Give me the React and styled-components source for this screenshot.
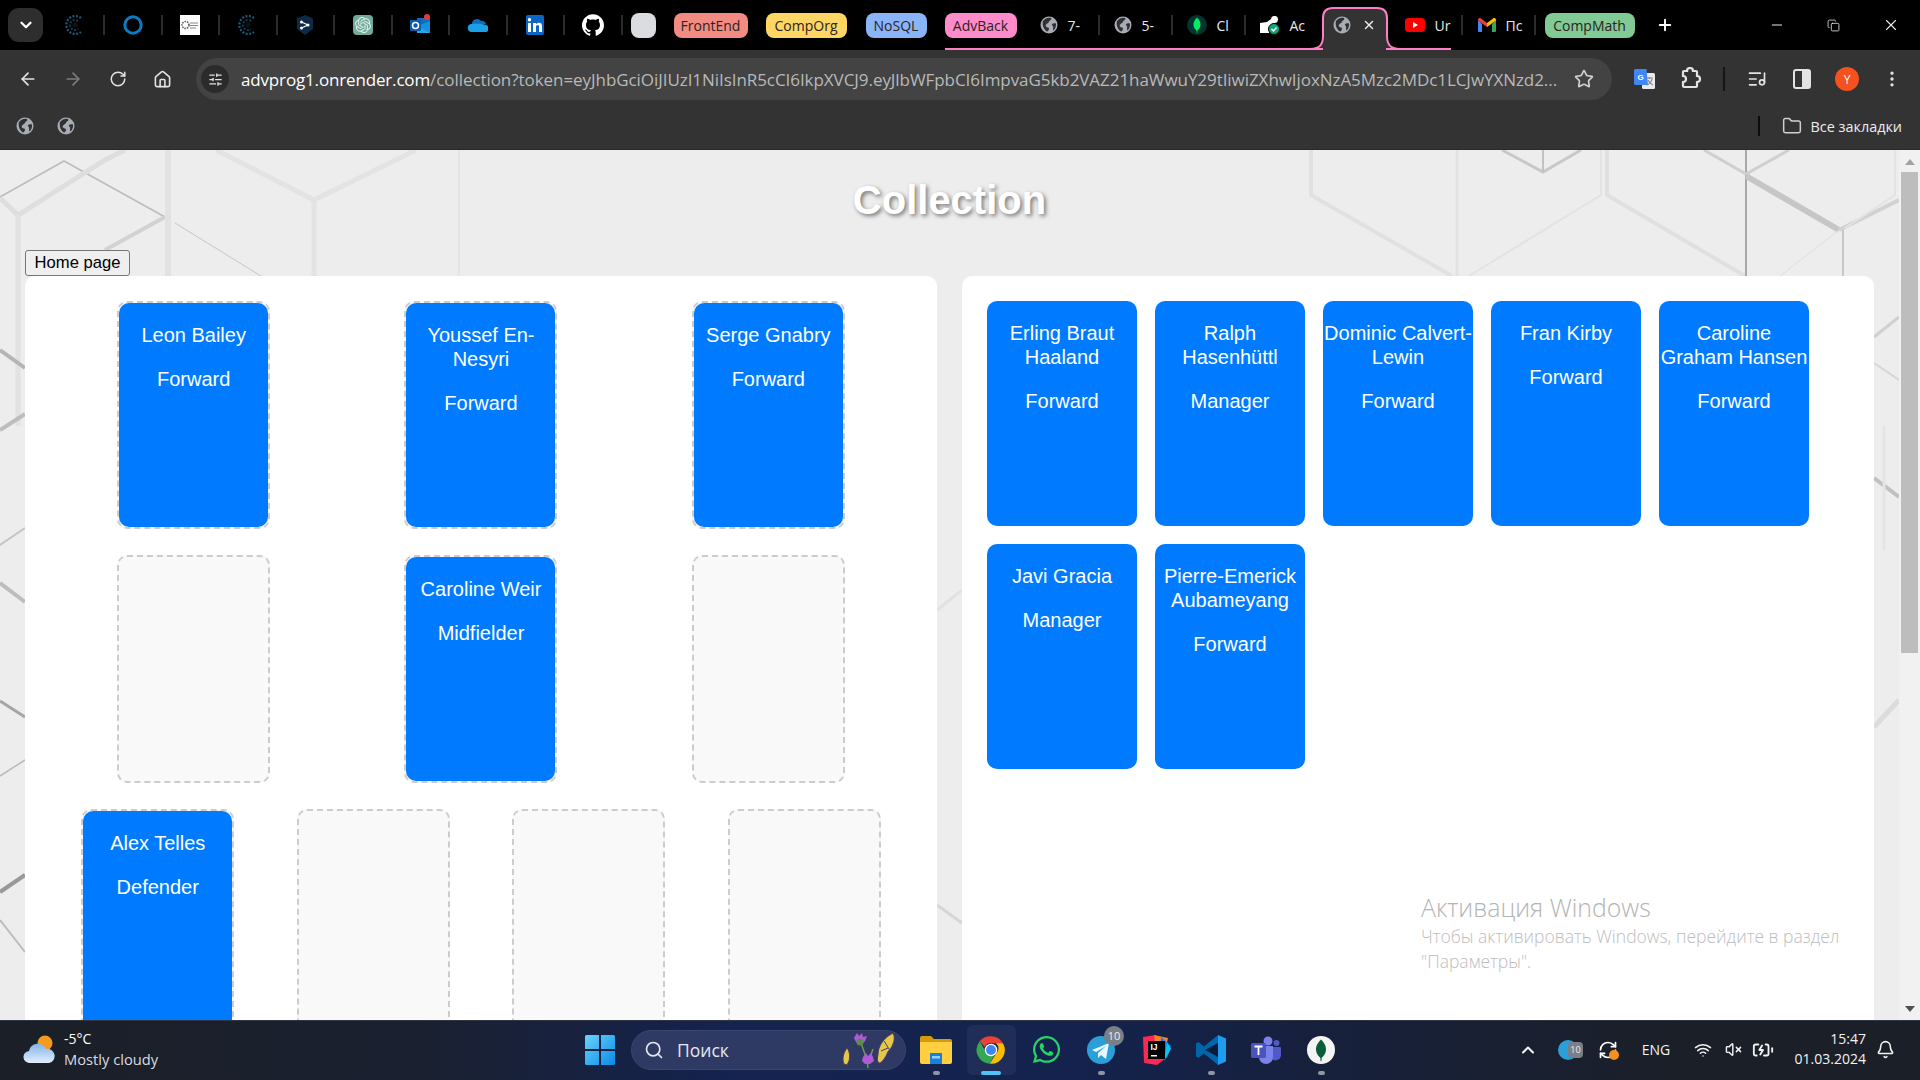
import React from "react";
import styled, { createGlobalStyle } from "styled-components";
import {
  ArrowLeft, ArrowRight, RotateCw, Home, Star, EllipsisVertical, Folder, Plus, X, Minus, Copy,
  ChevronDown, ChevronUp, Search, Bell, Wifi, VolumeX, BatteryCharging, SlidersHorizontal, ListMusic, RefreshCw,
} from "lucide-react";
import { SiGithub, SiOpenai } from "react-icons/si";
import { FaWhatsapp } from "react-icons/fa";

const Global = createGlobalStyle`
  html, body { margin: 0; padding: 0; height: 100%; overflow: hidden; background: #000; }
  #root { height: 100%; }
  * { box-sizing: border-box; }
`;

const UI = `"Open Sans", "Noto Sans", sans-serif`;
const WEB = `"Liberation Sans", Arial, sans-serif`;

const Screen = styled.div`
  width: 1920px; height: 1080px; display: flex; flex-direction: column; overflow: hidden; font-family: ${UI};
`;

/* ---------- tab strip ---------- */
const TabStrip = styled.div`
  position: relative; height: 50px; flex: none; background: #000; display: flex; align-items: center; padding-left: 8px;
`;
const TabMenu = styled.div`
  width: 35px; height: 34px; border-radius: 11px; background: #2e2e2e; color: #fff; margin-right: 3.5px;
  display: flex; align-items: center; justify-content: center;
`;
const Pinned = styled.div`
  position: relative; width: 57.5px; height: 50px; flex: none; display: flex; align-items: center; justify-content: center;
  &::after { content: ""; position: absolute; right: -1px; top: 15px; width: 2px; height: 20px; background: #2c2c2c; }
`;
const GroupChip = styled.div`
  height: 25px; width: ${p => p.$w}px; margin-left: ${p => p.$ml}px; flex: none; border-radius: 8px; background: ${p => p.$c};
  display: flex; align-items: center; justify-content: center; font-size: 14px; color: #2a2320;
`;
const Tab = styled.div`
  position: relative; height: 50px; width: ${p => p.$w}px; flex: none; padding-left: ${p => p.$pl}px; display: flex; align-items: center; gap: 10px;
  color: #e8eaed; font-size: 14px; white-space: nowrap;
  ${p => p.$sep && `&::after { content: ""; position: absolute; right: 0; top: 15px; width: 2px; height: 20px; background: #2c2c2c; }`}
`;
const ActiveTabShape = styled.div`
  position: relative; width: 64px; height: 50px; flex: none; display: flex; align-items: center; padding-left: 10px; color: #eee;
`;
const ActiveTabArt = styled.svg`
  position: absolute; left: -18px; top: 0; pointer-events: none;
`;
const ActiveTabContent = styled.div`
  position: relative; display: flex; align-items: center; gap: 11px;
`;
const PinkLine = styled.div`
  position: absolute; bottom: 0; height: 2px; background: #ff7ec4; left: ${p => p.$l}px; width: ${p => p.$w}px;
`;
const NewTab = styled.div`
  width: 30px; margin-left: 15px; color: #fff; display: flex; justify-content: center;
`;
const WinControls = styled.div`
  margin-left: auto; display: flex; color: #e8e8e8; align-items: center; padding-right: 1px;
`;
const WinBtn = styled.div`
  width: 57px; display: flex; justify-content: center;
`;
const GlobeSvg = styled.svg`flex: none;`;
const GptTile = styled.span`
  width: 20px; height: 20px; border-radius: 4px; background: #74aa9c; display: flex; align-items: center; justify-content: center; color: #dff0ea;
`;
const LinkedTile = styled.span`
  width: 18px; height: 20px; background: #0a66c2; border-radius: 2px; display: flex; align-items: center; justify-content: center;
`;

/* ---------- toolbar ---------- */
const Toolbar = styled.div`
  height: 50px; flex: none; background: #333333; display: flex; align-items: flex-start; padding: 8px 0 0 5px;
`;
const NavBtn = styled.div`
  width: 45px; height: 42px; flex: none; display: flex; align-items: center; justify-content: center; color: ${p => p.$dim ? "#7d7d7d" : "#e3e3e3"};
`;
const Omnibox = styled.div`
  width: 1416px; height: 42px; margin-left: 11px; margin-right: 10.5px; flex: none; border-radius: 21px; background: #434343; display: flex; align-items: center; padding: 0 18px 0 5px;
`;
const TuneBtn = styled.div`
  width: 28px; height: 28px; border-radius: 50%; background: #2b2b2b; color: #e3e3e3; display: flex; align-items: center; justify-content: center; flex: none;
`;
const Url = styled.div`
  margin-left: 12px; width: 1322px; font-size: 17px; white-space: nowrap; overflow: hidden; color: #b9b9b9; flex: none; letter-spacing: -0.06px;
`;
const UrlHost = styled.span`color: #fff; letter-spacing: -0.16px;`;
const StarBox = styled.div`
  margin-left: auto; color: #d0d0d0; display: flex;
`;
const ToolbarSep = styled.div`
  width: 22px; flex: none; height: 42px; display: flex; align-items: center; justify-content: center;
  &::after { content: ""; width: 2px; height: 24px; background: #151515; }
`;
const Avatar = styled.div`
  width: 24px; height: 24px; border-radius: 50%; background: #f4511e; color: #fff; font-size: 12px; display: flex; align-items: center; justify-content: center;
`;

/* ---------- bookmarks ---------- */
const Bookmarks = styled.div`
  height: 50px; flex: none; background: #333333; display: flex; align-items: flex-start; padding: 16px 18px 0 16px; border-bottom: 1px solid #2a2a2a;
`;
const BookmarkIcon = styled.div`
  width: 40.5px; height: 20px; display: flex; align-items: center;
`;
const AllBookmarks = styled.div`
  margin-left: auto; display: flex; align-items: center; color: #eee; font-size: 14.4px; height: 20px; gap: 9px;
`;
const BarSep = styled.div`
  width: 2px; height: 20px; background: #0c0c0c; margin-right: 13px;
`;

/* ---------- page ---------- */
const Viewport = styled.div`
  position: relative; flex: 1; min-height: 0; display: flex; overflow: hidden; background: #ededed;
`;
const Page = styled.div`
  position: relative; width: 1899px; flex: none; overflow: hidden; font-family: ${WEB};
`;
const Backdrop = styled.svg`
  position: absolute; left: 0; top: 0;
`;
const Title = styled.h1`
  position: relative; margin: 27px 0 27px; text-align: center; color: #fff; font: bold 40px/46px ${WEB}; text-shadow: 2px 2px 4px rgba(0,0,0,.5);
`;
const HomeButton = styled.button`
  position: relative; display: block; margin-left: 25px; width: 105px; height: 26px; padding: 0; font: 16.6px ${WEB}; color: #000; background: #efefef;
  border: 1px solid #767676; border-radius: 3px;
`;
const Panels = styled.div`
  position: relative; display: grid; grid-template-columns: 912px 912px; gap: 25px; padding: 0 25px;
`;
const Panel = styled.div`
  background: #fff; border-radius: 10px; padding: 25px; min-height: 900px;
`;
const PitchRow = styled.div`
  display: flex; justify-content: space-around; margin-bottom: 26px;
`;
const Slot = styled.div`
  width: 153px; height: 228px; border: 2px dashed #ccc; border-radius: 10px; background: #f9f9f9; flex: none;
`;
const Card = styled.div`
  width: ${p => p.$fill ? "100%" : "150px"}; height: ${p => p.$fill ? "100%" : "225px"}; background: #007bff; border-radius: 10px; color: #fff; text-align: center; font-size: 20px; line-height: 24px; overflow: hidden;
  flex: none;
`;
const CardText = styled.p`
  margin: 20px 0;
`;
const Pool = styled.div`
  display: flex; flex-wrap: wrap; gap: 18px;
`;
const Watermark = styled.div`
  position: absolute; left: 1421px; top: 741px; color: #bdbdbd; font-family: ${UI}; pointer-events: none; font-weight: 300;
`;
const WatermarkTitle = styled.div`font-size: 24.8px; line-height: 32px; color: #b4b4b4;`;
const WatermarkText = styled.div`font-size: 17.5px; line-height: 25px; width: 450px; margin-top: 1px;`;

const Scrollbar = styled.div`
  width: 21px; flex: none; background: #f1f1f1; display: flex; flex-direction: column; align-items: center; padding: 9px 0 0;
`;
const ArrowUp = styled.div`
  width: 0; height: 0; border: 5px solid transparent; border-top: 0; border-bottom: 6px solid #a3a3a3;
`;
const Thumb = styled.div`
  width: 17px; height: 481px; margin-top: 7px; background: #bdbdbd;
`;
const ArrowDown = styled.div`
  width: 0; height: 0; border: 5px solid transparent; border-bottom: 0; border-top: 6px solid #505050;
  margin-top: auto; margin-bottom: 8px;
`;

/* ---------- taskbar ---------- */
const Taskbar = styled.div`
  height: 60px; flex: none; display: flex; align-items: center; color: #fff; padding-bottom: 2px;
  background: linear-gradient(90deg, #1b1f27 0%, #1a2030 22%, #14234f 38%, #14224e 55%, #172038 72%, #1b1f27 88%);
  border-top: 1px solid #2f3542;
`;
const Weather = styled.div`
  width: 572.5px; flex: none; display: flex; align-items: center; padding-left: 23px; gap: 9px;
`;
const WeatherText = styled.div`
  font-size: 14.7px; line-height: 20px; color: #d8dbe2; margin-top: -1px;
`;
const WeatherTemp = styled.div`color: #fff; font-size: 14px;`;
const TaskIcon = styled.div`
  position: relative; width: 55px; height: 50px; flex: none; display: flex; align-items: center; justify-content: center;
  ${p => p.$active && `&::before { content: ""; position: absolute; left: 3px; right: 3px; top: 0; bottom: 0; border-radius: 6px; background: rgba(255,255,255,.05); }`}
  ${p => p.$dot && `&::after { content: ""; position: absolute; left: 50%; margin-left: -${p.$active ? 10 : 3.5}px; bottom: 0; height: 4px; border-radius: 2px; width: ${p.$active ? 20 : 7}px; background: ${p.$active ? "#4fc3f7" : "#8f96a3"}; }`}
`;
const IconStack = styled.div`position: relative; display: flex;`;
const Badge = styled.div`
  position: absolute; right: -9px; top: -10px; width: 20px; height: 20px; border-radius: 50%; background: #7b7f88; color: #eee; font-size: 11px; display: flex; align-items: center; justify-content: center;
`;
const TrayCount = styled.div`
  position: absolute; right: -5px; top: 4px; width: 15px; height: 16px; border-radius: 4px; background: #7b7f88; color: #eee; font-size: 9px; display: flex; align-items: center; justify-content: center;
`;
const SyncDot = styled.div`
  position: absolute; right: -1px; bottom: 0; width: 10px; height: 10px; border-radius: 50%; background: #f5901e;
`;
const SearchBox = styled.div`
  width: 275px; height: 40px; flex: none; margin: 0 2.5px 0 3.5px; border-radius: 20px; background: #2e3a63; display: flex; align-items: center; padding: 0 8px 0 12px; color: #e4e7ee;
  font-size: 17.5px; gap: 13px; border: 1px solid #3a466f;
`;
const SearchArt = styled.svg`margin-left: auto;`;
const Tray = styled.div`
  margin-left: auto; display: flex; align-items: center; padding-right: 20px; color: #f2f2f2;
`;
const TrayItem = styled.div`
  width: ${p => p.$w}px; flex: none; display: flex; justify-content: center; align-items: center; font-size: 14px;
`;
const Clock = styled.div`
  width: 88px; flex: none; padding-right: 4px; text-align: right; font-size: 14px; line-height: 20px; color: #f2f2f2; margin-top: -1px;
`;

/* ---------- drawings ---------- */
const Globe = ({ s = 18 }) => (
  <GlobeSvg width={s} height={s} viewBox="0 0 18 18">
    <circle cx="9" cy="9" r="8.5" fill="#a9adb3" />
    <path d="M3 5c2-3 6-4 8-3 1 1 0 2-1 2.500-1 .5-1 2-2 2.500S5 9 6 10.500s3 .5 3 2-1 3-2 3C4 14 1.800 9 3 5zM12 8c1-1 3-1 4-.5.3 2.500-.5 5-2.500 7C12.500 13 13.500 12 13 10.500 12.700 9.500 11.500 9 12 8z" fill="#2f3136" />
  </GlobeSvg>
);
const Sunburst = () => (
  <svg width="20" height="20" viewBox="0 0 20 20">
    <circle cx="10" cy="10" r="2.500" fill="#111" />
    <g stroke="#1d5a78" strokeWidth="2.200" strokeDasharray="2 1.500" fill="none"><path d="M16 3A9 9 0 1 0 16 17" /><path d="M13 6A5 5 0 1 0 13 14" stroke="#14384c" /></g>
  </svg>
);
const Ring = () => (
  <svg width="20" height="20" viewBox="0 0 20 20"><circle cx="10" cy="10" r="8.200" fill="none" stroke="#0a7cc1" strokeWidth="3" /></svg>
);
const WhiteLogo = () => (
  <svg width="20" height="20" viewBox="0 0 20 20">
    <rect width="20" height="20" fill="#fff" />
    <circle cx="5.500" cy="10" r="3.500" fill="none" stroke="#555" strokeWidth="1.500" strokeDasharray="1.500 1" />
    <path d="M10 8h8M10 10.500h8M10 13h6" stroke="#888" strokeWidth="1" />
  </svg>
);
const ShareLogo = () => (
  <svg width="16" height="20" viewBox="0 0 16 20">
    <path d="M8 0l8 3.500V14l-8 6-8-6V3.500z" fill="#0f2a46" />
    <path d="M4.500 7L11 10l-6.500 3" stroke="#fff" strokeWidth="1.200" fill="none" />
    <circle cx="4.500" cy="7" r="1.500" fill="#fff" /><circle cx="11" cy="10" r="1.500" fill="#fff" /><circle cx="4.500" cy="13" r="1.500" fill="#fff" />
  </svg>
);
const GptLogo = () => <GptTile><SiOpenai size={16} /></GptTile>;
const Outlook = () => (
  <svg width="21" height="22" viewBox="0 0 21 22">
    <path d="M7 4h13v15H7z" fill="#0f6cbd" /><path d="M7 12l13-5v12H7z" fill="#1490df" /><path d="M7 12l13 7H7z" fill="#28a8ea" />
    <rect x="0" y="6" width="11" height="11" rx="1" fill="#0a5cab" />
    <circle cx="5.500" cy="11.500" r="3" fill="none" stroke="#fff" strokeWidth="1.500" />
    <circle cx="17" cy="3" r="3" fill="#e0393e" />
  </svg>
);
const OneDrive = () => (
  <svg width="21" height="14" viewBox="0 0 21 14">
    <path d="M5 6a5 5 0 0 1 9-3 4 4 0 0 1 5 3z" fill="#0f6cbd" />
    <path d="M4.500 14A4 4 0 0 1 4 6.100c3-.6 8-.5 11 0l4 1a3.500 3.500 0 0 1-2 6.900z" fill="#1aa0e8" />
  </svg>
);
const LinkedIn = () => (
  <LinkedTile>
    <svg width="14" height="14" viewBox="0 0 14 14"><path d="M0 5h3v9H0zM1.500 0a1.700 1.700 0 1 1 0 3.400 1.700 1.700 0 0 1 0-3.400zM5 5h3v1.300C8.500 5.400 9.600 4.800 11 4.800c2.300 0 3 1.500 3 3.700V14h-3V9c0-1.200-.4-1.900-1.400-1.900S8 7.900 8 9v5H5z" fill="#fff" /></svg>
  </LinkedTile>
);
const LeafCircle = ({ s = 20, bg = "#023430", leaf = "#00ed64" }) => (
  <svg width={s} height={s} viewBox="0 0 20 20">
    <circle cx="10" cy="10" r="10" fill={bg} />
    <path d="M10 2.500c3 3 3.800 5.500 3.500 8-.3 2.300-1.800 4-3 5l-.2 2.500h-.6l-.2-2.500c-1.200-1-2.700-2.700-3-5-.3-2.500.5-5 3.500-8z" fill={leaf} />
  </svg>
);
const AccountCheck = () => (
  <svg width="20" height="20" viewBox="0 0 20 20">
    <path d="M0 8l7-1 4-3a3.500 3.500 0 1 1 3 4l-3 2-2 8H0z" fill="#fff" />
    <circle cx="14" cy="14" r="5.500" fill="#12a37f" stroke="#000" strokeWidth="1" />
    <path d="M11.500 14l2 2 3-3.500" stroke="#fff" strokeWidth="1.500" fill="none" />
  </svg>
);
const YouTube = () => (
  <svg width="20" height="14" viewBox="0 0 20 14"><rect width="20" height="14" rx="3.500" fill="#f00" /><path d="M8 4l5 3-5 3z" fill="#fff" /></svg>
);
const Gmail = () => (
  <svg width="18" height="14" viewBox="0 0 18 14">
    <path d="M0 2v11a1 1 0 0 0 1 1h3V6z" fill="#4285f4" /><path d="M18 2v11a1 1 0 0 1-1 1h-3V6z" fill="#34a853" />
    <path d="M0 2c0-2 2-2.500 3-1.500L9 5v4L0 2.500z" fill="#ea4335" /><path d="M18 2c0-2-2-2.500-3-1.500L9 5v4l9-6.500z" fill="#fbbc04" />
  </svg>
);
const Translate = () => (
  <svg width="22" height="24" viewBox="0 0 22 24">
    <rect x="8" y="6" width="13" height="16" rx="1.500" fill="#e8eaed" />
    <path d="M12 11h7M15.500 10v2M13 18c3-1.500 4.500-3.500 5-6M14 13c1 2 3 4 5 5" stroke="#80868b" strokeWidth="1.200" fill="none" />
    <path d="M1.500 2h11l1.500 16H1.500A1.500 1.500 0 0 1 0 16.500V3.500A1.500 1.500 0 0 1 1.500 2z" fill="#4285f4" />
    <text x="3.500" y="13" fontSize="8" fontWeight="bold" fill="#fff" fontFamily="Liberation Sans">G</text>
  </svg>
);
const ExtensionIcon = () => (
  <svg width="24" height="24" viewBox="0 0 24 24" fill="none" stroke="#e3e3e3" strokeWidth="2.200">
    <path d="M6 4h3a3 3 0 0 1 6 0h3a1 1 0 0 1 1 1v4a3 3 0 0 1 0 6v4a1 1 0 0 1-1 1H6a1 1 0 0 1-1-1v-4a3 3 0 0 0 0-6V5a1 1 0 0 1 1-1z" />
  </svg>
);
const SidePanelIcon = () => (
  <svg width="22" height="22" viewBox="0 0 22 22">
    <rect x="3" y="2" width="16" height="18" rx="2" fill="none" stroke="#e3e3e3" strokeWidth="2" />
    <rect x="11" y="2" width="8" height="18" fill="#e3e3e3" />
  </svg>
);
const Chrome = () => (
  <svg width="30" height="30" viewBox="0 0 48 48">
    <path d="M24 2a22 22 0 0 1 19 11H24a11 11 0 0 0-10 6L6 10A22 22 0 0 1 24 2z" fill="#ea4335" />
    <path d="M43 13a22 22 0 0 1-21 33l10-16a11 11 0 0 0 0-17z" fill="#fbbc04" />
    <path d="M22 46A22 22 0 0 1 6 10l9 16a11 11 0 0 0 15 5z" fill="#34a853" />
    <circle cx="24" cy="24" r="10" fill="#fff" /><circle cx="24" cy="24" r="8" fill="#4285f4" />
  </svg>
);
const WinLogo = () => (
  <svg width="30" height="30" viewBox="0 0 30 30">
    <defs><linearGradient id="wl" x1="0" y1="0" x2="1" y2="1"><stop offset="0" stopColor="#6ad4fb" /><stop offset="1" stopColor="#0a8ae6" /></linearGradient></defs>
    <path d="M0 1.500A1.500 1.500 0 0 1 1.500 0H14v14H0zM16 0h12.500A1.500 1.500 0 0 1 30 1.500V14H16zM0 16h14v14H1.500A1.500 1.500 0 0 1 0 28.500zM16 16h14v12.500a1.500 1.500 0 0 1-1.500 1.500H16z" fill="url(#wl)" />
  </svg>
);
const Explorer = () => (
  <svg width="32" height="28" viewBox="0 0 32 28">
    <path d="M0 2a2 2 0 0 1 2-2h9l3 3h16a2 2 0 0 1 2 2v4H0z" fill="#d69a0b" />
    <path d="M0 6h32v20a2 2 0 0 1-2 2H2a2 2 0 0 1-2-2z" fill="#ffcf3f" />
    <rect x="10" y="17" width="12" height="11" fill="#1c7fd6" /><rect x="12" y="20" width="8" height="2.500" fill="#8fd0ff" />
  </svg>
);
const Telegram = () => (
  <svg width="28" height="28" viewBox="0 0 28 28">
    <circle cx="14" cy="14" r="14" fill="#2a9fd8" />
    <path d="M5 14l17-7-3 16-5-4-3 3v-5l8-7-10 6z" fill="#eaf6fc" />
  </svg>
);
const IntelliJ = () => (
  <svg width="30" height="30" viewBox="0 0 30 30">
    <path d="M2 2l13-2-2 15L3 28z" fill="#fe2857" /><path d="M13 0l14 3-3 14-9-5z" fill="#fc801d" />
    <path d="M20 2l10 9-4 12-7-5z" fill="#087cfa" /><path d="M3 28l9-12 13 7-9 7z" fill="#fe2857" /><path d="M26 7l4 7-7 12z" fill="#07c3f2" />
    <rect x="7" y="6" width="17" height="18" fill="#000" />
    <text x="9.500" y="15" fontSize="8.500" fontWeight="bold" fill="#fff" fontFamily="Liberation Sans">IJ</text>
    <rect x="10" y="20" width="6" height="1.500" fill="#fff" />
  </svg>
);
const VsCode = () => (
  <svg width="30" height="30" viewBox="0 0 30 30">
    <path d="M22 0l8 3.500v23L22 30z" fill="#1f9cf0" />
    <path d="M22 0v8L9 15l13 7v8L8 18.500 2.500 23 0 21.500v-13L2.500 7 8 11.500z" fill="#0065a9" />
    <path d="M22 8v14l-9-7z" fill="#0a1a3c" />
  </svg>
);
const Teams = () => (
  <svg width="30" height="28" viewBox="0 0 30 28">
    <circle cx="17" cy="5" r="4.500" fill="#7b83eb" /><circle cx="25.500" cy="7" r="3" fill="#5059c9" />
    <path d="M20 11h9a1 1 0 0 1 1 1v7a5.500 5.500 0 0 1-10 3z" fill="#5059c9" />
    <path d="M8 10h14v11a7 7 0 0 1-14 0z" fill="#7b83eb" />
    <rect x="0" y="7" width="15" height="15" rx="1.500" fill="#4b53bc" />
    <path d="M3.500 10.500h8M7.500 10.500V19" stroke="#fff" strokeWidth="1.800" />
  </svg>
);
const WeatherIcon = () => (
  <svg width="32" height="30" viewBox="0 0 32 30">
    <defs><linearGradient id="cl" x1="0" y1="0" x2="0" y2="1"><stop offset="0" stopColor="#7fb4ea" /><stop offset="1" stopColor="#e4eefc" /></linearGradient></defs>
    <circle cx="22" cy="8" r="7.500" fill="#f39a1f" />
    <path d="M7 28a6 6 0 0 1-1-12 9 9 0 0 1 17-2 6.500 6.500 0 0 1 3 14z" fill="url(#cl)" />
  </svg>
);
const Butterflies = () => (
  <SearchArt width="56" height="38" viewBox="0 0 56 38">
    <path d="M19 9l7 20M26 29l1 8M32 18l-5 14" stroke="#6f9a55" strokeWidth="1.500" fill="none" />
    <path d="M13 7l3-5 2 3 3-3 1 4 4-1-2 5a5 5 0 0 1-9 1z" fill="#b05ad8" /><circle cx="19" cy="11" r="3.500" fill="#5e8a4a" />
    <path d="M22 26l3-4 2 3 3-3 2 4 1 4-4 3h-5l-3-3z" fill="#b05ad8" />
    <path d="M37 23c0-8 6-17 15-21 3 5 1 13-5 19-2 6-7 12-9 11-2-1-2-5-1-9z" fill="#e3c84a" stroke="#4a3b66" strokeWidth="1.200" />
    <path d="M43 10l5 8M40 20l7-3" stroke="#4a3b66" strokeWidth="1" />
    <path d="M3 33c-2-4-1-11 3-16 3 4 3 9 2 13l-2 4z" fill="#e3c84a" stroke="#4a3b66" strokeWidth="1" />
  </SearchArt>
);
const TrayBadge = () => (
  <IconStack>
    <svg width="20" height="24" viewBox="0 0 20 24"><circle cx="10" cy="12" r="10" fill="#2a9fd8" /></svg>
    <TrayCount>10</TrayCount>
  </IconStack>
);

const BackdropArt = () => {
  const lines = [
    ["M0 47L64 11L165 67", "#bdbdbd", 1.6], ["M165 67L105 100", "#d2d2d2", 4], ["M0 48L18 65L105 10L125 0", "#dedede", 5],
    ["M18 65V276", "#e2e2e2", 5], ["M168 0V126", "#e2e2e2", 6], ["M216 0L314 50L416 0", "#e3e3e3", 5], ["M314 50V126", "#e3e3e3", 5],
    ["M459 0V126", "#dddddd", 1], ["M175 73L261 126", "#c6c6c6", 1],
    ["M0 200L25 218", "#b5b5b5", 4], ["M0 280L25 264", "#bdbdbd", 4], ["M0 395L25 378", "#c4c4c4", 2], ["M0 433L25 452", "#bdbdbd", 4],
    ["M0 551L25 567", "#a5a5a5", 3], ["M0 626L25 610", "#bbbbbb", 1.500], ["M0 742L25 725", "#999999", 4], ["M0 770L25 802", "#bbbbbb", 2],
    ["M937 755L962 773", "#d6d6d6", 3], ["M937 460L962 440", "#e2e2e2", 3],
    ["M1311 0V45L1452 126", "#e1e1e1", 4], ["M1457 0V126", "#e2e2e2", 3], ["M1502 0L1543 22L1581 0", "#c8c8c8", 3], ["M1543 0V22", "#c2c2c2", 2],
    ["M1601 0V45L1469 126", "#e3e3e3", 2], ["M1607 0V45L1745 126", "#e0e0e0", 4], ["M1746 0V126", "#a8a8a8", 2],
    ["M1704 0L1746 24L1789 0", "#cfcfcf", 3], ["M1746 26L1839 80", "#c6c6c6", 6], ["M1839 80L1899 50", "#d2d2d2", 4], ["M1843 80V126", "#c8c8c8", 2],
    ["M1839 80L1780 126", "#dddddd", 1], ["M1895 0V45L1845 78", "#e3e3e3", 2],
    ["M1874 187L1899 167", "#d0d0d0", 3], ["M1874 213L1899 230", "#d5d5d5", 2], ["M1874 328L1899 347", "#c0c0c0", 4], ["M1874 577L1899 550", "#dcdcdc", 5], ["M1884 276V400", "#e4e4e4", 3],
  ];
  return (
    <Backdrop width="1899" height="869" viewBox="0 0 1899 869">
      {lines.map(([d, c, w], i) => <path key={i} d={d} stroke={c} strokeWidth={w} fill="none" />)}
    </Backdrop>
  );
};

const PinnedIcons = [<Sunburst />, <Ring />, <WhiteLogo />, <Sunburst />, <ShareLogo />, <GptLogo />, <Outlook />, <OneDrive />, <LinkedIn />, <SiGithub size={22} color="#fff" />];

const Player = ({ name, role, fill }) => (
  <Card $fill={fill}>
    <CardText>{name}</CardText>
    <CardText>{role}</CardText>
  </Card>
);

const Row = ({ slots }) => (
  <PitchRow>
    {slots.map((s, i) => <Slot key={i}>{s && <Player fill name={s[0]} role={s[1]} />}</Slot>)}
  </PitchRow>
);

const pool = [
  ["Erling Braut Haaland", "Forward"], ["Ralph Hasenhüttl", "Manager"], ["Dominic Calvert-Lewin", "Forward"], ["Fran Kirby", "Forward"],
  ["Caroline Graham Hansen", "Forward"], ["Javi Gracia", "Manager"], ["Pierre-Emerick Aubameyang", "Forward"],
];

const URL_REST = "/collection?token=eyJhbGciOiJIUzI1NiIsInR5cCI6IkpXVCJ9.eyJlbWFpbCI6ImpvaG5kb2VAZ21haWwuY29tIiwiZXhwIjoxNzA5Mzc2MDc1LCJwYXNzd2...";

export default function App() {
  return (
    <Screen>
      <Global />
      <TabStrip>
        <TabMenu><ChevronDown size={18} strokeWidth={3} /></TabMenu>
        {PinnedIcons.map((ic, i) => <Pinned key={i}>{ic}</Pinned>)}
        <GroupChip $w={25} $ml={9} $c="#dadce0" />
        <GroupChip $w={74} $ml={18} $c="#f28b82">FrontEnd</GroupChip>
        <GroupChip $w={81} $ml={18} $c="#fdd663">CompOrg</GroupChip>
        <GroupChip $w={61} $ml={19} $c="#8ab4f8">NoSQL</GroupChip>
        <GroupChip $w={72} $ml={18} $c="#ff8bcb">AdvBack</GroupChip>
        <Tab $w={83} $pl={23} $sep><Globe />7-</Tab>
        <Tab $w={73} $pl={14} $sep><Globe />5-</Tab>
        <Tab $w={73} $pl={14} $sep><LeafCircle />Cl</Tab>
        <Tab $w={77} $pl={14}><AccountCheck />Ac</Tab>
        <ActiveTabShape>
          <ActiveTabArt width="100" height="50" viewBox="0 0 100 50">
            <path d="M0 49C12 49 18 48 18 36V18C18 11 22 8 28 8H72C78 8 82 11 82 18V36C82 48 88 49 100 49V50H0z" fill="#333" />
            <path d="M0 49C12 49 18 48 18 36V18C18 11 22 8 28 8H72C78 8 82 11 82 18V36C82 48 88 49 100 49" fill="none" stroke="#ff7ec4" strokeWidth="2" />
          </ActiveTabArt>
          <ActiveTabContent><Globe /><X size={14} strokeWidth={2.5} /></ActiveTabContent>
        </ActiveTabShape>
        <Tab $w={76} $pl={18} $sep><YouTube />Ur</Tab>
        <Tab $w={73} $pl={15} $sep><Gmail />Пс</Tab>
        <GroupChip $w={90} $ml={9} $c="#81c995">CompMath</GroupChip>
        <NewTab><Plus size={18} strokeWidth={2.5} /></NewTab>
        <WinControls>
          <WinBtn><Minus size={16} strokeWidth={1.5} /></WinBtn>
          <WinBtn><Copy size={13} strokeWidth={1.5} /></WinBtn>
          <WinBtn><X size={18} strokeWidth={1.5} /></WinBtn>
        </WinControls>
        <PinkLine $l={945} $w={378} />
        <PinkLine $l={1386} $w={65} />
      </TabStrip>

      <Toolbar>
        <NavBtn><ArrowLeft size={20} /></NavBtn>
        <NavBtn $dim><ArrowRight size={20} /></NavBtn>
        <NavBtn><RotateCw size={18} /></NavBtn>
        <NavBtn><Home size={19} /></NavBtn>
        <Omnibox>
          <TuneBtn><SlidersHorizontal size={15} /></TuneBtn>
          <Url><UrlHost>advprog1.onrender.com</UrlHost>{URL_REST}</Url>
          <StarBox><Star size={20} strokeWidth={2} /></StarBox>
        </Omnibox>
        <NavBtn><Translate /></NavBtn>
        <NavBtn><ExtensionIcon /></NavBtn>
        <ToolbarSep />
        <NavBtn><ListMusic size={20} /></NavBtn>
        <NavBtn><SidePanelIcon /></NavBtn>
        <NavBtn><Avatar>Y</Avatar></NavBtn>
        <NavBtn><EllipsisVertical size={20} /></NavBtn>
      </Toolbar>

      <Bookmarks>
        <BookmarkIcon><Globe /></BookmarkIcon>
        <BookmarkIcon><Globe /></BookmarkIcon>
        <AllBookmarks>
          <BarSep />
          <Folder size={20} strokeWidth={1.8} color="#d0d0d0" />
          Все закладки
        </AllBookmarks>
      </Bookmarks>

      <Viewport>
        <Page>
          <BackdropArt />
          <Title>Collection</Title>
          <HomeButton>Home page</HomeButton>
          <Panels>
            <Panel>
              <Row slots={[["Leon Bailey", "Forward"], ["Youssef En-Nesyri", "Forward"], ["Serge Gnabry", "Forward"]]} />
              <Row slots={[null, ["Caroline Weir", "Midfielder"], null]} />
              <Row slots={[["Alex Telles", "Defender"], null, null, null]} />
            </Panel>
            <Panel>
              <Pool>{pool.map(([n, r]) => <Player key={n} name={n} role={r} />)}</Pool>
            </Panel>
          </Panels>
          <Watermark>
            <WatermarkTitle>Активация Windows</WatermarkTitle>
            <WatermarkText>Чтобы активировать Windows, перейдите в раздел "Параметры".</WatermarkText>
          </Watermark>
        </Page>
        <Scrollbar><ArrowUp /><Thumb /><ArrowDown /></Scrollbar>
      </Viewport>

      <Taskbar>
        <Weather>
          <WeatherIcon />
          <WeatherText><WeatherTemp>-5°C</WeatherTemp>Mostly cloudy</WeatherText>
        </Weather>
        <TaskIcon><WinLogo /></TaskIcon>
        <SearchBox><Search size={20} />Поиск<Butterflies /></SearchBox>
        <TaskIcon $dot><Explorer /></TaskIcon>
        <TaskIcon $dot $active><IconStack><Chrome /></IconStack></TaskIcon>
        <TaskIcon><FaWhatsapp size={31} color="#25d366" /></TaskIcon>
        <TaskIcon $dot><IconStack><Telegram /><Badge>10</Badge></IconStack></TaskIcon>
        <TaskIcon><IntelliJ /></TaskIcon>
        <TaskIcon $dot><VsCode /></TaskIcon>
        <TaskIcon><Teams /></TaskIcon>
        <TaskIcon $dot><LeafCircle s={28} bg="#f4f4f4" leaf="#0b5d3a" /></TaskIcon>
        <Tray>
          <TrayItem $w={40}><ChevronUp size={20} strokeWidth={2.5} /></TrayItem>
          <TrayItem $w={40}><TrayBadge /></TrayItem>
          <TrayItem $w={40}><IconStack><RefreshCw size={20} color="#fff" /><SyncDot /></IconStack></TrayItem>
          <TrayItem $w={56}>ENG</TrayItem>
          <TrayItem $w={38}><Wifi size={18} /></TrayItem>
          <TrayItem $w={22}><VolumeX size={17} /></TrayItem>
          <TrayItem $w={38}><BatteryCharging size={22} /></TrayItem>
          <Clock>15:47<br />01.03.2024</Clock>
          <TrayItem $w={30}><Bell size={19} /></TrayItem>
        </Tray>
      </Taskbar>
    </Screen>
  );
}
